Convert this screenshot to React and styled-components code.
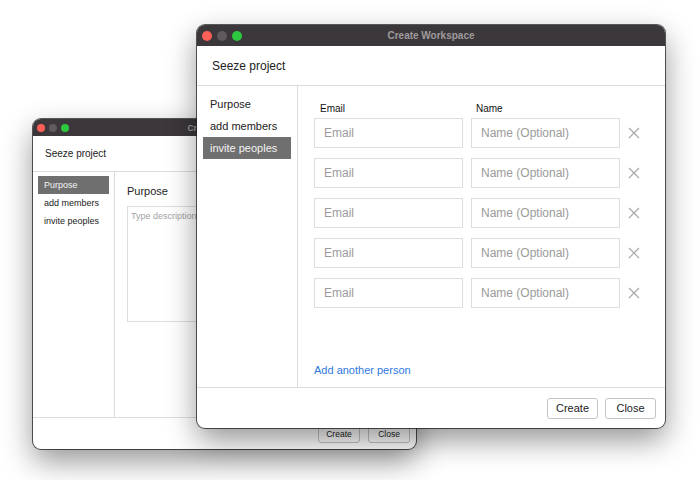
import styled, { createGlobalStyle } from 'styled-components'

const Global = createGlobalStyle`
body {
  margin: 0;
  background: #fff;
  font-family: "Liberation Sans", Arial, sans-serif;
}
`

const BIG = { bar: 21, dot: 10, dotGap: 5, dotLeft: 5, title: 10, head: 40, headFont: 12, headPad: 15, side: 101, item: 22, itemFont: 11, itemPad: 7, sidePad: 7, foot: 41, btnH: 21, btnW: 51, btnFont: 11, btnGap: 7, footPad: 9 }
const SMALL = { bar: 17, dot: 8, dotGap: 4, dotLeft: 4, title: 8.5, head: 36, headFont: 10, headPad: 12, side: 82, item: 18, itemFont: 9, itemPad: 6, sidePad: 4, foot: 32, btnH: 18, btnW: 42, btnFont: 8.5, btnGap: 8, footPad: 6 }

const Desk = styled.div`
position: relative;
width: 700px;
height: 480px;
overflow: hidden;
background: #fff;
`
const Window = styled.div`
position: absolute;
left: ${p => p.$x}px;
top: ${p => p.$y}px;
width: ${p => p.$w}px;
height: ${p => p.$h}px;
display: flex;
flex-direction: column;
background: #fff;
border-radius: 8px;
overflow: hidden;
box-shadow: 0 12px 30px rgba(0, 0, 0, 0.42), 0 0 0 1px rgba(40, 40, 40, 0.75);
`
const TitleBar = styled.div`
position: relative;
flex: 0 0 ${p => p.$s.bar}px;
background: #3b373a;
display: flex;
align-items: center;
justify-content: center;
color: #9f9b9e;
font-weight: bold;
font-size: ${p => p.$s.title}px;
`
const Lights = styled.div`
position: absolute;
left: ${p => p.$s.dotLeft}px;
top: 0;
bottom: 0;
display: flex;
align-items: center;
gap: ${p => p.$s.dotGap}px;
`
const Dot = styled.span`
width: ${p => p.$s.dot}px;
height: ${p => p.$s.dot}px;
border-radius: 50%;
background: ${p => p.$c};
`
const Header = styled.div`
flex: 0 0 ${p => p.$s.head}px;
box-sizing: border-box;
display: flex;
align-items: center;
padding-left: ${p => p.$s.headPad}px;
font-size: ${p => p.$s.headFont}px;
color: #222;
border-bottom: 1px solid #dcdcdc;
`
const Body = styled.div`
flex: 1;
display: flex;
min-height: 0;
`
const Sidebar = styled.div`
flex: 0 0 ${p => p.$s.side}px;
box-sizing: border-box;
border-right: 1px solid #dcdcdc;
padding: ${p => p.$s.sidePad}px ${p => p.$s.itemPad - 1}px 0 ${p => p.$s.itemPad - 1}px;
display: flex;
flex-direction: column;
`
const NavItem = styled.div`
height: ${p => p.$s.item}px;
display: flex;
align-items: center;
padding-left: ${p => p.$s.itemPad}px;
font-size: ${p => p.$s.itemFont}px;
color: ${p => p.$active ? '#f4f4f4' : '#222'};
background: ${p => p.$active ? '#6f6f6f' : 'transparent'};
`
const Footer = styled.div`
flex: 0 0 ${p => p.$s.foot}px;
box-sizing: border-box;
border-top: 1px solid #dcdcdc;
display: flex;
align-items: center;
justify-content: flex-end;
gap: ${p => p.$s.btnGap}px;
padding-right: ${p => p.$s.footPad}px;
`
const Button = styled.button`
height: ${p => p.$s.btnH}px;
min-width: ${p => p.$s.btnW}px;
padding: 0 4px;
font-family: inherit;
font-size: ${p => p.$s.btnFont}px;
color: #222;
background: #fff;
border: 1px solid #c4c4c4;
border-radius: 3px;
`

const Content = styled.div`
flex: 1;
display: flex;
flex-direction: column;
padding: 12px 0 0 16px;
`
const Labels = styled.div`
display: grid;
grid-template-columns: 156px 148px;
align-items: center;
padding-left: 6px;
height: 20px;
font-size: 10px;
color: #111;
`
const Row = styled.div`
display: flex;
align-items: center;
gap: 8px;
margin-bottom: 10px;
`
const Input = styled.input`
box-sizing: border-box;
width: ${p => p.$w}px;
height: 30px;
padding: 0 9px;
border: 1px solid #dedede;
font-family: inherit;
font-size: 12px;
color: #222;
outline: none;
&::placeholder { color: #9b9b9b; }
`
const Remove = styled.span`
display: flex;
`
const AddLink = styled.a`
margin-top: auto;
margin-bottom: 11px;
font-size: 11px;
color: #2f7ae0;
`

const PurposePane = styled.div`
flex: 1;
padding: 8px 0 0 12px;
display: flex;
flex-direction: column;
`
const PaneTitle = styled.div`
font-size: 11px;
color: #222;
height: 22px;
display: flex;
align-items: center;
margin-bottom: 4px;
`
const TextArea = styled.textarea`
box-sizing: border-box;
width: 276px;
height: 116px;
padding: 4px 3px;
border: 1px solid #dedede;
font-family: inherit;
font-size: 9px;
resize: none;
outline: none;
&::placeholder { color: #a3a3a3; }
`

const Chrome = ({ s, children }) => (
  <>
    <TitleBar $s={s}>
      <Lights $s={s}>
        <Dot $s={s} $c="#fe5f57" />
        <Dot $s={s} $c="#5e5a5e" />
        <Dot $s={s} $c="#2bc840" />
      </Lights>
      Create Workspace
    </TitleBar>
    <Header $s={s}>Seeze project</Header>
    {children}
    <Footer $s={s}>
      <Button $s={s}>Create</Button>
      <Button $s={s}>Close</Button>
    </Footer>
  </>
)

const Nav = ({ s, active }) => (
  <Sidebar $s={s}>
    {['Purpose', 'add members', 'invite peoples'].map(n => (
      <NavItem key={n} $s={s} $active={n === active}>{n}</NavItem>
    ))}
  </Sidebar>
)

const Cross = () => (
  <svg width="12" height="12" viewBox="0 0 12 12">
    <path d="M1 1 L11 11 M11 1 L1 11" stroke="#a6a6a6" strokeWidth="1.1" fill="none" />
  </svg>
)

const App = () => (
  <Desk>
    <Global />
    <Window $x={33} $y={119} $w={383} $h={330}>
      <Chrome s={SMALL}>
        <Body>
          <Nav s={SMALL} active="Purpose" />
          <PurposePane>
            <PaneTitle>Purpose</PaneTitle>
            <TextArea placeholder="Type description about the project" />
          </PurposePane>
        </Body>
      </Chrome>
    </Window>
    <Window $x={197} $y={25} $w={468} $h={403}>
      <Chrome s={BIG}>
        <Body>
          <Nav s={BIG} active="invite peoples" />
          <Content>
            <Labels>
              <span>Email</span>
              <span>Name</span>
            </Labels>
            {[0, 1, 2, 3, 4].map(i => (
              <Row key={i}>
                <Input $w={149} placeholder="Email" />
                <Input $w={149} placeholder="Name (Optional)" />
                <Remove><Cross /></Remove>
              </Row>
            ))}
            <AddLink>Add another person</AddLink>
          </Content>
        </Body>
      </Chrome>
    </Window>
  </Desk>
)

export default App
